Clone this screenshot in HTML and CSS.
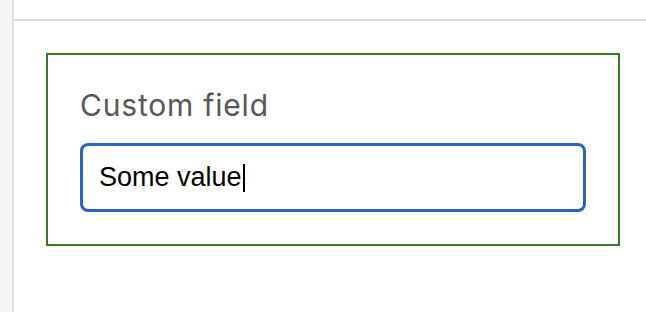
FILE: index.html
```html
<!DOCTYPE html>
<html lang="en">
<head>
    <meta charset="UTF-8">
    <meta name="viewport" content="width=device-width, initial-scale=1.0">
    <title>Custom field</title>
    <link rel="stylesheet" href="styles.css">
</head>
<body>

<div class="layout">
    <div class="sidebar"></div>
    <div class="main">
        <div class="topbar"></div>
        <div class="content">
            <div class="field-box">
                <label class="field-label" id="customFieldLabel">Custom field</label>
                <div class="field-input" role="textbox" aria-labelledby="customFieldLabel">Some value<span class="caret"></span></div>
            </div>
        </div>
    </div>
</div>

</body>
</html>
```

FILE: styles.css
```css
html, body {
    margin: 0;
    height: 100%;
    background-color: #fff;
}
.layout {
    display: flex;
    height: 100%;
}
.sidebar {
    width: 12px;
    flex: none;
    background-color: #f4f4f4;
    border-right: 2px solid #dddddd;
}
.main {
    flex: 1;
}
.topbar {
    height: 19px;
    border-bottom: 2px solid #dddddd;
}
.content {
    padding: 32px 26px 0 32px;
}
.field-box {
    border: 2px solid #3b7a23;
    padding: 32px;
}
.field-label {
    display: block;
    font-family: 'Inter', sans-serif;
    font-size: 30px;
    line-height: 36px;
    letter-spacing: 0.8px;
    color: #575757;
    margin-bottom: 20px;
}
.field-input {
    display: flex;
    align-items: center;
    height: 69px;
    box-sizing: border-box;
    padding: 0 16px;
    border: 3px solid #2a62c9;
    border-radius: 8px;
    font-family: 'Liberation Sans', Arial, sans-serif;
    font-size: 27px;
    color: #000;
    background-color: #fff;
    white-space: pre;
}
.caret {
    display: inline-block;
    width: 2px;
    height: 28px;
    margin-left: 1px;
    margin-top: 1px;
    background-color: #000;
}
```
